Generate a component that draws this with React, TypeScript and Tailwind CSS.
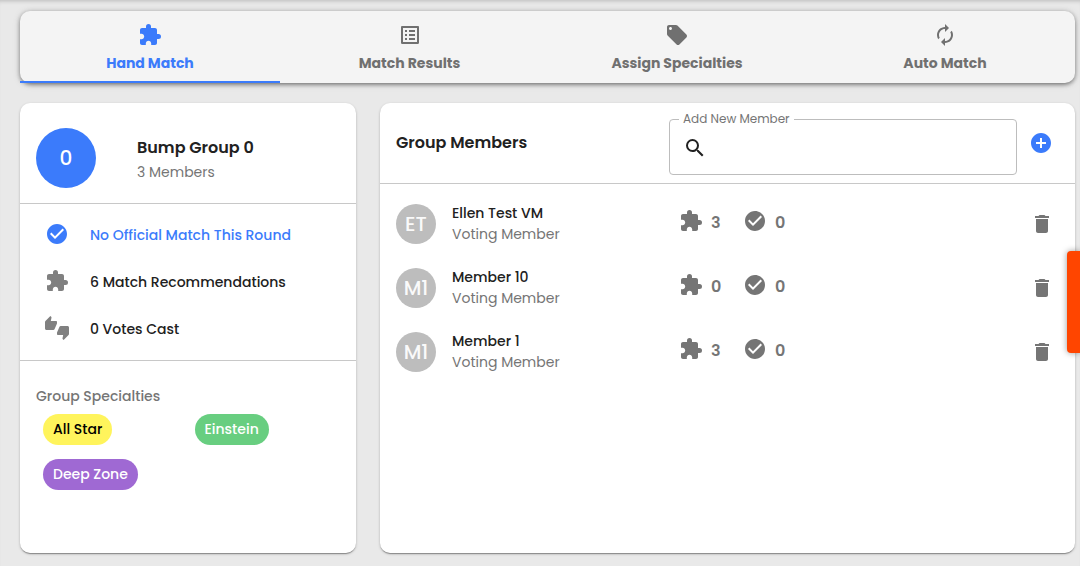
import React from "react";
import type { IconType } from "react-icons";
import {
  MdAddCircle,
  MdAutorenew,
  MdCheckCircle,
  MdDelete,
  MdExtension,
  MdListAlt,
  MdLocalOffer,
  MdSearch,
  MdThumbsUpDown,
} from "react-icons/md";

const tabs: { label: string; icon: IconType }[] = [
  { label: "Hand Match", icon: MdExtension },
  { label: "Match Results", icon: MdListAlt },
  { label: "Assign Specialties", icon: MdLocalOffer },
  { label: "Auto Match", icon: MdAutorenew },
];

const summary: { text: string; icon: IconType; active?: boolean }[] = [
  { text: "No Official Match This Round", icon: MdCheckCircle, active: true },
  { text: "6 Match Recommendations", icon: MdExtension },
  { text: "0 Votes Cast", icon: MdThumbsUpDown },
];

const specialties = [
  { name: "All Star", style: "bg-[#fff45c] text-black" },
  { name: "Einstein", style: "bg-[#68ce80] text-white" },
  { name: "Deep Zone", style: "bg-[#9f69d3] text-white" },
];

const members = [
  { initials: "ET", name: "Ellen Test VM", matches: 3, votes: 0 },
  { initials: "M1", name: "Member 10", matches: 0, votes: 0 },
  { initials: "M1", name: "Member 1", matches: 3, votes: 0 },
];

const card =
  "rounded-[10px] bg-white shadow-[0_2px_1px_-1px_rgba(0,0,0,0.2),0_1px_1px_rgba(0,0,0,0.14),0_1px_3px_rgba(0,0,0,0.2)]";

function Tabs() {
  return (
    <nav
      role="tablist"
      aria-label="Match views"
      className="grid grid-cols-[260fr_259fr_276fr_260fr] rounded-[10px] bg-[#f4f4f4] shadow-[0_2px_4px_-1px_rgba(0,0,0,0.4),0_1px_5px_rgba(0,0,0,0.2),0_1px_8px_rgba(0,0,0,0.12)]"
    >
      {tabs.map(({ label, icon: Icon }, i) => (
        <button
          key={label}
          type="button"
          role="tab"
          aria-selected={i === 0}
          className={
            i === 0
              ? "flex h-[72px] flex-col items-center gap-1 border-b-2 border-[#3b7bfb] pt-3 text-[#3b7bfb]"
              : "flex h-[72px] flex-col items-center gap-1 border-b-2 border-transparent pt-3 text-[#707070]"
          }
        >
          <Icon size={24} />
          <span className="text-sm leading-6 font-bold">{label}</span>
        </button>
      ))}
    </nav>
  );
}

function GroupCard() {
  return (
    <section className={card}>
      <header className="flex h-[101px] items-center border-b border-[#c8c8c8] px-4 pt-[9px]">
        <div className="flex size-[60px] shrink-0 items-center justify-center rounded-full bg-[#3b7bfb] text-xl font-medium text-white">
          0
        </div>
        <div className="ml-[41px]">
          <h2 className="pt-0.5 text-base leading-[26px] font-semibold text-[#212121]">Bump Group 0</h2>
          <p className="text-sm leading-[22px] text-[#757575]">3 Members</p>
        </div>
      </header>
      <ul className="border-b border-[#c8c8c8] pt-[7px] pb-2">
        {summary.map(({ text, icon: Icon, active }) => (
          <li key={text} className="flex h-[47px] items-center gap-[21px] pl-[25px]">
            <Icon
              size={24}
              className={active ? "mb-0.5 shrink-0 text-[#3b7bfb]" : "mb-0.5 shrink-0 text-[#808080]"}
            />
            <span
              className={
                active ? "text-sm font-medium text-[#3b7bfb]" : "text-sm font-medium text-[#212121]"
              }
            >
              {text}
            </span>
          </li>
        ))}
      </ul>
      <div className="px-4 pt-6 pb-4">
        <h3 className="text-sm leading-[22px] font-medium text-[#757575]">Group Specialties</h3>
        <ul className="mt-[7px] grid grid-cols-2 gap-y-[14px] px-[7px] pr-0">
          {specialties.map(({ name, style }) => (
            <li key={name} className="flex odd:pl-0 even:pl-[3px]">
              <span className={`rounded-2xl px-[10px] text-sm leading-[31px] font-medium ${style}`}>
                {name}
              </span>
            </li>
          ))}
        </ul>
      </div>
    </section>
  );
}

function MembersCard() {
  return (
    <section className={card}>
      <header className="grid h-[81px] grid-cols-[289fr_348fr_58fr] items-center border-b border-[#c8c8c8]">
        <h2 className="pl-4 text-base font-semibold text-[#212121]">Group Members</h2>
        <fieldset className="mt-[3px] flex h-[61px] min-w-0 items-center rounded border border-[#bdbdbd] pb-0.5 pl-[13px]">
          <legend className="-ml-1 px-1 text-xs leading-[10px] text-[#757575]">
            <label htmlFor="new-member">Add New Member</label>
          </legend>
          <MdSearch size={24} className="shrink-0 text-[#212121]" />
          <input
            id="new-member"
            type="text"
            className="h-8 min-w-0 flex-1 bg-transparent px-2 text-base outline-none"
          />
        </fieldset>
        <button type="button" aria-label="Add member" className="pl-3 text-[#3b7bfb]">
          <MdAddCircle size={24} />
        </button>
      </header>
      <ul className="py-2">
        {members.map((m) => (
          <li key={m.name} className="grid h-16 grid-cols-[289fr_348fr_58fr] items-center">
            <div className="flex items-center gap-4 pl-4">
              <div className="flex size-10 shrink-0 items-center justify-center rounded-full bg-[#bdbdbd] text-xl font-medium text-[#fafafa]">
                {m.initials}
              </div>
              <div>
                <p className="text-sm leading-[21px] font-medium text-[#212121]">{m.name}</p>
                <p className="text-sm leading-[21px] text-[#757575]">Voting Member</p>
              </div>
            </div>
            <div className="flex items-center pb-0.5 pl-[10px] text-base font-semibold text-[#757575]">
              <MdExtension size={24} className="mb-1" />
              <span className="w-10 pl-2">{m.matches}</span>
              <MdCheckCircle size={24} className="mb-1" />
              <span className="pl-2">{m.votes}</span>
            </div>
            <button type="button" aria-label={`Remove ${m.name}`} className="pl-[13px] text-[#757575]">
              <MdDelete size={24} />
            </button>
          </li>
        ))}
      </ul>
    </section>
  );
}

export default function App() {
  return (
    <div className="flex min-h-screen flex-col bg-[#e9e9e9] pt-[11px] pr-[5px] pb-[13px] pl-5 font-['Poppins','Inter',sans-serif] shadow-[inset_0_4px_4px_-3px_rgba(0,0,0,0.2)]">
      <Tabs />
      <main className="mt-5 grid flex-1 grid-cols-[336fr_695fr] gap-6">
        <GroupCard />
        <MembersCard />
      </main>
      <button
        type="button"
        aria-label="Feedback"
        className="fixed top-[251px] right-0 h-[102px] w-[13px] rounded-l bg-[#ff4500] shadow-[0_0_6px_rgba(0,0,0,0.4)]"
      />
    </div>
  );
}
